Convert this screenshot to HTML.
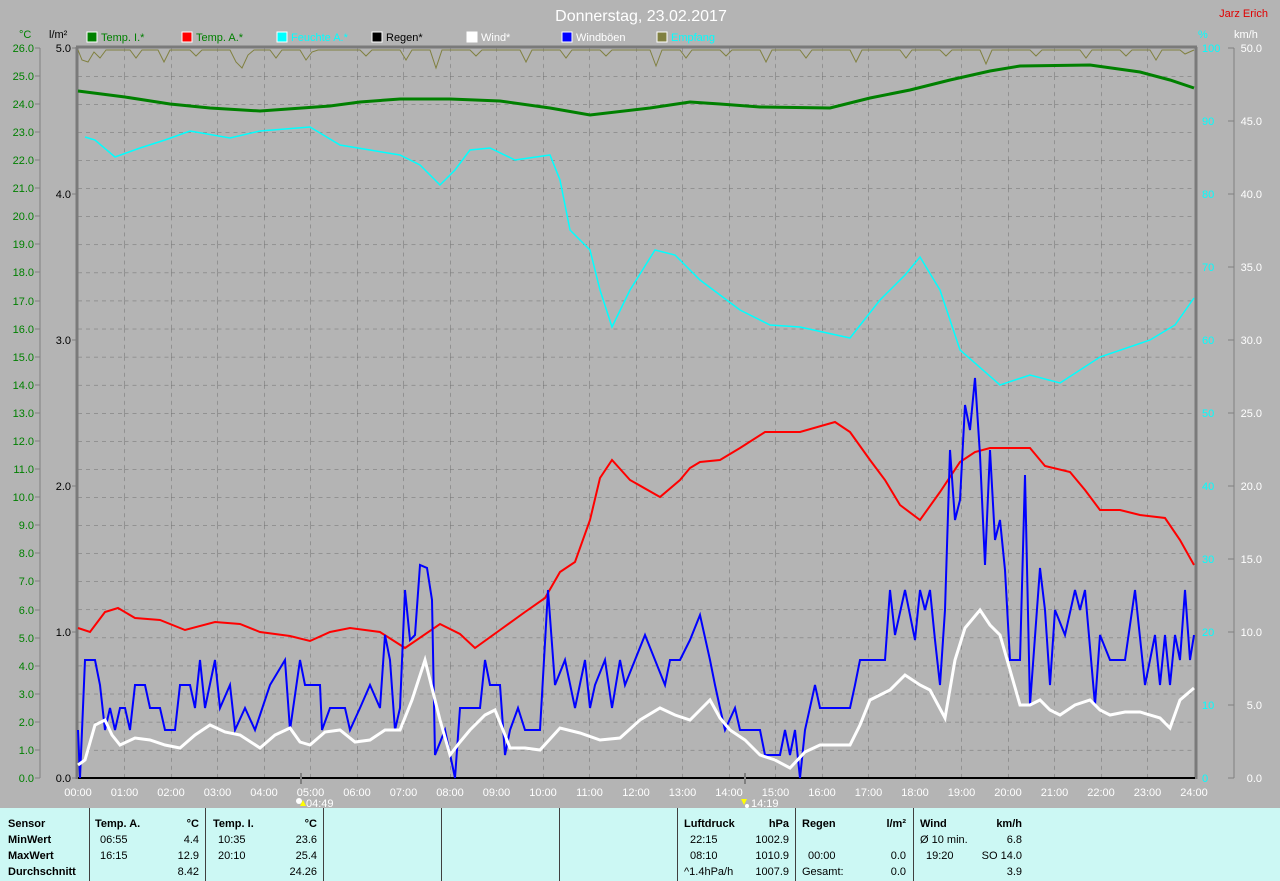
<!DOCTYPE html>
<html><head><meta charset="utf-8"><style>
html,body{margin:0;padding:0;background:#b4b4b4;width:1280px;height:881px;overflow:hidden}
svg{display:block}
text{font-family:"Liberation Sans",Arial,sans-serif;font-size:11px}
</style></head><body>
<svg width="1280" height="881" viewBox="0 0 1280 881" xmlns="http://www.w3.org/2000/svg">
<defs>
<pattern id="g" x="78" y="48" width="46.5" height="28.077" patternUnits="userSpaceOnUse">
<line x1="0" y1="0" x2="46.5" y2="0" stroke="#6e6e6e" stroke-dasharray="4,4"/>
<line x1="0" y1="0" x2="0" y2="28.077" stroke="#6e6e6e" stroke-dasharray="4,4"/>
</pattern>
</defs>
<rect width="1280" height="881" fill="#b4b4b4"/>
<rect x="78" y="48" width="1116" height="730" fill="url(#g)"/>
<text x="641" y="21" fill="#fff" text-anchor="middle" style="font-size:16px">Donnerstag, 23.02.2017</text>
<text x="1268" y="17" fill="#e00000" text-anchor="end">Jarz Erich</text>
<g>
<text x="19" y="38" fill="#008000">°C</text>
<text x="49" y="38" fill="#000">l/m²</text>
<rect x="87" y="32" width="10" height="10" fill="#008000" stroke="#fff"/><text x="101" y="41" fill="#008000">Temp. I.*</text>
<rect x="182" y="32" width="10" height="10" fill="#f00" stroke="#fff"/><text x="196" y="41" fill="#008000">Temp. A.*</text>
<rect x="277" y="32" width="10" height="10" fill="#0ff" stroke="#fff"/><text x="291" y="41" fill="#0ff">Feuchte A.*</text>
<rect x="372" y="32" width="10" height="10" fill="#000" stroke="#fff"/><text x="386" y="41" fill="#000">Regen*</text>
<rect x="467" y="32" width="10" height="10" fill="#fff" stroke="#fff"/><text x="481" y="41" fill="#fff">Wind*</text>
<rect x="562" y="32" width="10" height="10" fill="#00f" stroke="#fff"/><text x="576" y="41" fill="#fff">Windböen</text>
<rect x="657" y="32" width="10" height="10" fill="#808040" stroke="#fff"/><text x="671" y="41" fill="#0ff">Empfang</text>
<text x="1198" y="38" fill="#0ff">%</text>
<text x="1234" y="38" fill="#fff">km/h</text>
</g>
<line x1="40" y1="48" x2="40" y2="778" stroke="#808080"/>
<g fill="#008000" text-anchor="end">
<text x="34" y="52">26.0</text><text x="34" y="80">25.0</text><text x="34" y="108">24.0</text><text x="34" y="136">23.0</text><text x="34" y="164">22.0</text><text x="34" y="192">21.0</text><text x="34" y="220">20.0</text><text x="34" y="248">19.0</text><text x="34" y="276">18.0</text><text x="34" y="305">17.0</text><text x="34" y="333">16.0</text><text x="34" y="361">15.0</text><text x="34" y="389">14.0</text><text x="34" y="417">13.0</text><text x="34" y="445">12.0</text><text x="34" y="473">11.0</text><text x="34" y="501">10.0</text><text x="34" y="529">9.0</text><text x="34" y="557">8.0</text><text x="34" y="585">7.0</text><text x="34" y="614">6.0</text><text x="34" y="642">5.0</text><text x="34" y="670">4.0</text><text x="34" y="698">3.0</text><text x="34" y="726">2.0</text><text x="34" y="754">1.0</text><text x="34" y="782">0.0</text>
</g>
<g stroke="#808080">
<path d="M35 48h5M35 76h5M35 104h5M35 132h5M35 160h5M35 188h5M35 216h5M35 244h5M35 272h5M35 301h5M35 329h5M35 357h5M35 385h5M35 413h5M35 441h5M35 469h5M35 497h5M35 525h5M35 553h5M35 581h5M35 610h5M35 638h5M35 666h5M35 694h5M35 722h5M35 750h5M35 778h5"/>
<path d="M72 48h4M72 194h4M72 340h4M72 486h4M72 632h4M72 778h4"/>
</g>
<g fill="#000" text-anchor="end">
<text x="71" y="52">5.0</text><text x="71" y="198">4.0</text><text x="71" y="344">3.0</text><text x="71" y="490">2.0</text><text x="71" y="636">1.0</text><text x="71" y="782">0.0</text>
</g>
<line x1="1234" y1="48" x2="1234" y2="778" stroke="#808080"/>
<g stroke="#808080"><path d="M1228 48h6M1228 121h6M1228 194h6M1228 267h6M1228 340h6M1228 413h6M1228 486h6M1228 559h6M1228 632h6M1228 705h6M1228 778h6"/></g>
<g fill="#0ff">
<text x="1202" y="52">100</text><text x="1202" y="125">90</text><text x="1202" y="198">80</text><text x="1202" y="271">70</text><text x="1202" y="344">60</text><text x="1202" y="417">50</text><text x="1202" y="490">40</text><text x="1202" y="563">30</text><text x="1202" y="636">20</text><text x="1202" y="709">10</text><text x="1202" y="782">0</text>
</g>
<g fill="#fff" text-anchor="end">
<text x="1262" y="52">50.0</text><text x="1262" y="125">45.0</text><text x="1262" y="198">40.0</text><text x="1262" y="271">35.0</text><text x="1262" y="344">30.0</text><text x="1262" y="417">25.0</text><text x="1262" y="490">20.0</text><text x="1262" y="563">15.0</text><text x="1262" y="636">10.0</text><text x="1262" y="709">5.0</text><text x="1262" y="782">0.0</text>
</g>
<line x1="77" y1="47" x2="77" y2="779" stroke="#7a7a7a" stroke-width="3"/>
<line x1="76" y1="47" x2="1197" y2="47" stroke="#7a7a7a" stroke-width="3"/>
<line x1="1196" y1="47" x2="1196" y2="779" stroke="#7a7a7a" stroke-width="3"/>
<line x1="78" y1="778" x2="1195" y2="778" stroke="#000" stroke-width="2"/>
<polyline fill="none" stroke="#808040" stroke-width="1" points="78,50 82,60 88,62 94,52 100,58 106,50 130,50 136,58 142,50 158,50 164,62 170,50 190,50 196,56 202,50 230,50 236,62 242,68 248,55 254,50 270,50 276,58 282,50 300,50 306,60 312,52 318,50 360,50 366,56 372,50 400,50 406,60 412,50 430,50 436,68 442,50 470,50 476,56 482,50 520,50 526,62 532,50 560,50 566,58 572,50 600,50 606,56 612,50 650,50 656,66 662,50 680,50 686,58 692,50 720,50 726,56 732,50 760,50 766,62 772,50 800,50 806,58 812,50 850,50 856,62 862,50 900,50 906,58 912,50 940,50 946,56 952,50 980,50 986,64 992,50 1030,50 1036,56 1042,50 1080,50 1086,58 1092,50 1120,50 1126,56 1132,50 1150,50 1156,60 1162,50 1180,50 1185,54 1194,50"/>
<polyline fill="none" stroke="#00ffff" stroke-width="1.5" points="85,137 95,140 115,157 140,148 165,140 190,131 230,138 260,131 310,127 340,145 370,150 400,155 420,165 440,185 455,170 470,150 490,148 515,160 550,155 560,180 570,230 590,250 600,290 612,327 630,290 655,250 675,255 700,280 740,310 770,325 800,327 850,338 880,300 905,275 920,257 940,290 960,350 1000,385 1030,375 1060,383 1100,357 1150,340 1175,325 1194,298"/>
<polyline fill="none" stroke="#008000" stroke-width="3" points="78,91 125,97 170,104 210,108 260,111 330,106 360,102 400,99 450,99 500,101 550,108 590,115 650,108 690,102 720,104 760,107 830,108 870,98 910,90 950,80 990,71 1020,66 1090,65 1140,72 1170,80 1194,88"/>
<polyline fill="none" stroke="#ff0000" stroke-width="2" points="78,628 90,632 105,612 118,608 135,618 160,620 185,630 215,622 240,624 260,632 290,636 310,641 330,632 350,628 380,632 405,648 440,624 460,634 475,648 500,630 525,612 545,598 560,572 575,562 590,520 600,478 612,460 630,480 660,497 680,480 690,468 700,462 720,460 740,448 765,432 800,432 835,422 850,432 870,460 885,480 900,505 920,520 940,492 960,462 975,452 990,448 1030,448 1045,466 1070,472 1085,490 1100,510 1120,510 1140,515 1165,518 1180,540 1194,565"/>
<polyline fill="none" stroke="#0000ff" stroke-width="2" points="78,730 80,778 85,660 95,660 100,685 105,730 110,708 115,730 120,708 125,708 130,730 135,685 145,685 150,708 160,708 165,730 175,730 180,685 190,685 195,708 200,660 205,708 215,660 220,708 230,685 235,730 245,708 255,730 270,685 285,660 290,730 300,660 305,685 320,685 322,730 330,708 345,708 350,730 360,708 370,685 380,708 385,635 390,660 395,730 400,708 405,590 410,640 415,635 420,565 427,568 432,600 435,755 445,730 455,778 460,708 480,708 485,660 490,685 500,685 505,755 510,730 518,708 525,730 540,730 548,590 555,685 565,660 575,708 585,660 590,708 595,685 605,660 612,708 620,660 625,685 635,660 645,635 655,660 665,685 670,660 680,660 690,640 700,615 710,660 715,685 720,708 725,730 735,708 740,730 760,730 765,755 780,755 785,730 790,755 795,730 800,778 805,730 815,685 820,708 850,708 855,685 860,660 885,660 890,590 895,635 905,590 915,640 920,590 925,610 930,590 935,640 940,685 945,610 950,450 955,520 960,500 965,405 970,430 975,378 980,455 985,565 990,450 995,540 1000,520 1005,570 1010,660 1020,660 1025,475 1030,705 1040,568 1045,610 1050,685 1055,610 1065,635 1075,590 1080,610 1085,590 1095,705 1100,635 1110,660 1125,660 1135,590 1145,685 1155,635 1160,685 1165,635 1170,685 1175,635 1180,660 1185,590 1190,660 1194,635"/>
<polyline fill="none" stroke="#ffffff" stroke-width="3" points="78,765 85,760 95,725 105,720 112,735 120,745 135,738 150,740 165,745 180,748 195,735 210,725 225,732 240,735 260,748 275,735 290,728 300,742 310,745 325,732 340,730 355,742 370,740 385,730 400,730 412,700 425,660 435,700 440,720 450,755 460,742 470,730 485,715 495,710 505,735 510,748 525,748 540,750 560,728 580,733 600,740 620,738 640,720 660,708 675,715 690,720 700,710 710,700 720,718 730,730 745,740 760,755 775,760 790,768 805,752 820,745 850,745 860,725 870,700 890,690 905,675 920,685 930,690 945,718 955,660 965,628 980,610 990,625 1000,635 1010,670 1020,705 1030,705 1040,700 1050,710 1060,715 1075,705 1090,700 1100,710 1110,715 1125,712 1140,712 1160,718 1170,728 1180,700 1194,688"/>
<g fill="#fff" text-anchor="middle">
<text x="78" y="796">00:00</text><text x="124.5" y="796">01:00</text><text x="171" y="796">02:00</text><text x="217.5" y="796">03:00</text><text x="264" y="796">04:00</text><text x="310.5" y="796">05:00</text><text x="357" y="796">06:00</text><text x="403.5" y="796">07:00</text><text x="450" y="796">08:00</text><text x="496.5" y="796">09:00</text><text x="543" y="796">10:00</text><text x="589.5" y="796">11:00</text><text x="636" y="796">12:00</text><text x="682.5" y="796">13:00</text><text x="729" y="796">14:00</text><text x="775.5" y="796">15:00</text><text x="822" y="796">16:00</text><text x="868.5" y="796">17:00</text><text x="915" y="796">18:00</text><text x="961.5" y="796">19:00</text><text x="1008" y="796">20:00</text><text x="1054.5" y="796">21:00</text><text x="1101" y="796">22:00</text><text x="1147.5" y="796">23:00</text><text x="1194" y="796">24:00</text>
</g>
<line x1="301" y1="773" x2="301" y2="784" stroke="#808080" stroke-width="2"/>
<line x1="745" y1="773" x2="745" y2="784" stroke="#808080" stroke-width="2"/>
<circle cx="299" cy="801" r="3" fill="#fff"/><path d="M300 806l3-6 3 6z" fill="#ff0"/>
<text x="306" y="807" fill="#fff">04:49</text>
<path d="M741 799l3 6 3-6z" fill="#ff0"/><circle cx="747" cy="806" r="2" fill="#fff"/>
<text x="751" y="807" fill="#fff">14:19</text>
<rect x="0" y="808" width="1280" height="73" fill="#ccf8f4"/>
<g stroke="#404040" stroke-width="1">
<path d="M89.5 808v73M205.5 808v73M323.5 808v73M441.5 808v73M559.5 808v73M677.5 808v73M795.5 808v73M913.5 808v73"/>
</g>
<g fill="#000" style="font-weight:bold">
<text x="8" y="827">Sensor</text><text x="8" y="843">MinWert</text><text x="8" y="859">MaxWert</text><text x="8" y="875">Durchschnitt</text>
<text x="95" y="827">Temp. A.</text><text x="199" y="827" text-anchor="end">°C</text>
<text x="213" y="827">Temp. I.</text><text x="317" y="827" text-anchor="end">°C</text>
<text x="684" y="827">Luftdruck</text><text x="789" y="827" text-anchor="end">hPa</text>
<text x="802" y="827">Regen</text><text x="906" y="827" text-anchor="end">l/m²</text>
<text x="920" y="827">Wind</text><text x="1022" y="827" text-anchor="end">km/h</text>
</g>
<g fill="#000">
<text x="100" y="843">06:55</text><text x="199" y="843" text-anchor="end">4.4</text>
<text x="100" y="859">16:15</text><text x="199" y="859" text-anchor="end">12.9</text>
<text x="199" y="875" text-anchor="end">8.42</text>
<text x="218" y="843">10:35</text><text x="317" y="843" text-anchor="end">23.6</text>
<text x="218" y="859">20:10</text><text x="317" y="859" text-anchor="end">25.4</text>
<text x="317" y="875" text-anchor="end">24.26</text>
<text x="690" y="843">22:15</text><text x="789" y="843" text-anchor="end">1002.9</text>
<text x="690" y="859">08:10</text><text x="789" y="859" text-anchor="end">1010.9</text>
<text x="684" y="875">^1.4hPa/h</text><text x="789" y="875" text-anchor="end">1007.9</text>
<text x="808" y="859">00:00</text><text x="906" y="859" text-anchor="end">0.0</text>
<text x="802" y="875">Gesamt:</text><text x="906" y="875" text-anchor="end">0.0</text>
<text x="920" y="843">Ø 10 min.</text><text x="1022" y="843" text-anchor="end">6.8</text>
<text x="926" y="859">19:20</text><text x="1022" y="859" text-anchor="end">SO 14.0</text>
<text x="1022" y="875" text-anchor="end">3.9</text>
</g>
</svg>
</body></html>
